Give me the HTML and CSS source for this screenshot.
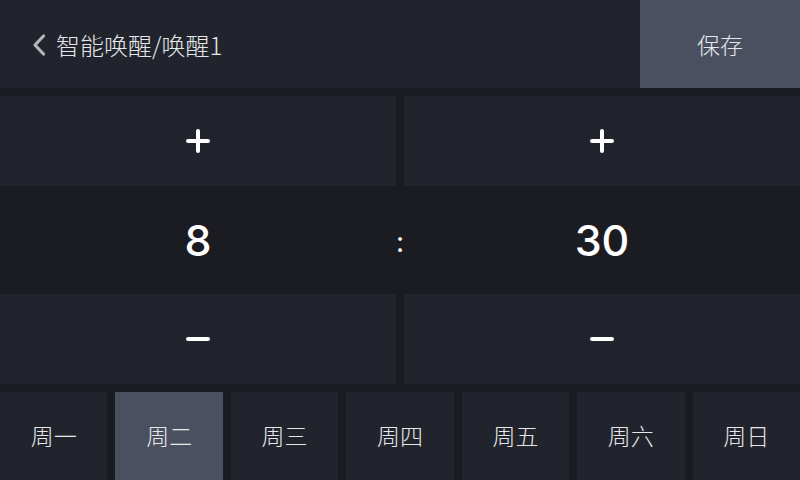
FILE: index.html
```html
<!DOCTYPE html>
<html lang="zh">
<head>
<meta charset="utf-8">
<link rel="stylesheet" href="styles.css">
</head>
<body>
<div class="app">
  <header class="topbar">
    <div class="title">
      <svg class="back" width="16" height="24" viewBox="0 0 16 24"><path d="M12.5 3 L4 12 L12.5 21" fill="none" stroke="#b4b6bb" stroke-width="3.2" stroke-linecap="round" stroke-linejoin="round"/></svg>
      <span class="title-text">智能唤醒/唤醒1</span>
    </div>
    <div class="save">保存</div>
  </header>
  <div class="btn-row">
    <div class="btn"><span class="plus"></span></div>
    <div class="btn"><span class="plus"></span></div>
  </div>
  <div class="time-row">
    <div class="num">8</div>
    <div class="colon">:</div>
    <div class="num">30</div>
  </div>
  <div class="btn-row minus-row">
    <div class="btn"><span class="minus"></span></div>
    <div class="btn"><span class="minus"></span></div>
  </div>
  <div class="days">
    <div class="day">周一</div>
    <div class="day active">周二</div>
    <div class="day">周三</div>
    <div class="day">周四</div>
    <div class="day">周五</div>
    <div class="day">周六</div>
    <div class="day">周日</div>
  </div>
</div>
</body>
</html>
```
FILE: styles.css
```css
* { box-sizing: border-box; }
html, body { margin: 0; padding: 0; }
body {
  background: #1b1c21;
  font-family: "Noto Sans CJK SC", "Noto Sans", sans-serif;
  color: #e4e5e8;
}
.app {
  width: 800px;
  height: 480px;
  display: flex;
  flex-direction: column;
  overflow: hidden;
}
.topbar {
  height: 88px;
  flex-shrink: 0;
  display: flex;
  background: #22242d;
  margin-bottom: 8px;
}
.title {
  flex: 1;
  display: flex;
  align-items: center;
  padding-left: 31px;
  gap: 9px;
}
.back { display: block; margin-top: 1px; }
.title-text {
  font-size: 24px;
  font-weight: 300;
  color: #e6e7ea;
}
.save {
  width: 160px;
  background: #4a5060;
  display: flex;
  align-items: center;
  justify-content: center;
  font-size: 23px;
  font-weight: 300;
  color: #e6e7ea;
}
.btn-row {
  height: 90px;
  display: flex;
  gap: 8px;
  flex-shrink: 0;
}
.minus-row { margin-bottom: 8px; }
.btn {
  flex: 1;
  background: #22242d;
  display: flex;
  align-items: center;
  justify-content: center;
}
.plus {
  position: relative;
  width: 24px;
  height: 24px;
}
.plus::before, .plus::after, .minus {
  content: "";
  display: block;
  background: #fff;
  border-radius: 2px;
}
.plus::before {
  position: absolute;
  left: 0; top: 10px;
  width: 24px; height: 4px;
}
.plus::after {
  position: absolute;
  left: 10px; top: 0;
  width: 4px; height: 24px;
}
.minus {
  width: 24px;
  height: 4px;
}
.time-row {
  height: 108px;
  display: grid;
  grid-template-columns: 1fr 8px 1fr;
  align-items: center;
  justify-items: center;
  flex-shrink: 0;
}
.num {
  font-family: "Inter", "Noto Sans", sans-serif;
  font-weight: 500;
  font-size: 43px;
  color: #fff;
}
.colon {
  font-family: "Inter", "Noto Sans", sans-serif;
  font-size: 28px;
  color: #fff;
  margin-top: 4px;
}
.days {
  flex: 1;
  display: flex;
  gap: 8px;
}
.day {
  flex: 1;
  background: #22242d;
  display: flex;
  align-items: center;
  justify-content: center;
  font-size: 23px;
  font-weight: 300;
  color: #e6e7ea;
  padding-bottom: 2px;
}
.day.active { background: #4a5060; }
```
